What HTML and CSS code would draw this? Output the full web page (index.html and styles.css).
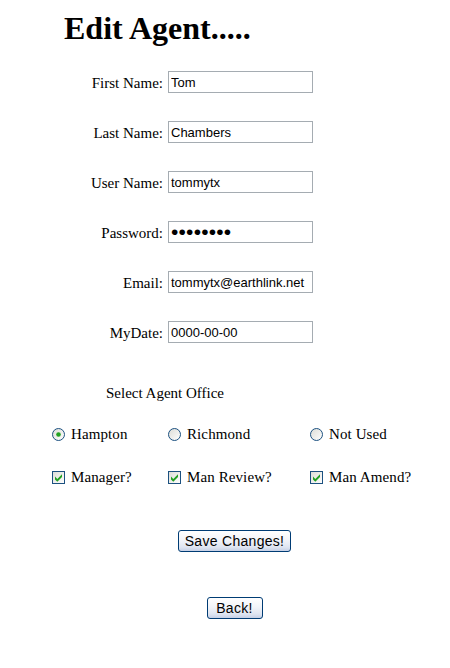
FILE: index.html
```html
<!DOCTYPE html>
<html>
<head>
<meta charset="utf-8">
<title>Edit Agent</title>
<link rel="stylesheet" href="styles.css">
</head>
<body>
<h1 class="title">Edit Agent.....</h1>
<form class="agent-form">
  <div class="fields">
    <label class="field-label" for="fn">First Name:</label>
    <input class="text-input" id="fn" type="text" value="Tom">
    <label class="field-label" for="ln">Last Name:</label>
    <input class="text-input" id="ln" type="text" value="Chambers">
    <label class="field-label" for="un">User Name:</label>
    <input class="text-input" id="un" type="text" value="tommytx">
    <label class="field-label" for="pw">Password:</label>
    <input class="text-input password" id="pw" type="password" value="tommytx1">
    <label class="field-label" for="em">Email:</label>
    <input class="text-input" id="em" type="text" value="tommytx@earthlink.net">
    <label class="field-label" for="md">MyDate:</label>
    <input class="text-input" id="md" type="text" value="0000-00-00">
  </div>

  <div class="office-title">Select Agent Office</div>

  <div class="options">
    <label class="opt">
      <input class="hidden-input" type="radio" name="office" checked>
      <svg class="radio-icon" width="13" height="13" viewBox="0 0 13 13">
        <defs>
          <linearGradient id="rg" x1="0" y1="0" x2="1" y2="1">
            <stop offset="0" stop-color="#dcdcd6"/>
            <stop offset="1" stop-color="#ffffff"/>
          </linearGradient>
        </defs>
        <circle cx="6.5" cy="6.5" r="6" fill="url(#rg)" stroke="#1c5180"/>
        <circle cx="6.5" cy="6.5" r="2.3" fill="#21a121"/>
      </svg>
      <span>Hampton</span>
    </label>
    <label class="opt">
      <input class="hidden-input" type="radio" name="office">
      <svg class="radio-icon" width="13" height="13" viewBox="0 0 13 13">
        <circle cx="6.5" cy="6.5" r="6" fill="url(#rg)" stroke="#1c5180"/>
      </svg>
      <span>Richmond</span>
    </label>
    <label class="opt">
      <input class="hidden-input" type="radio" name="office">
      <svg class="radio-icon" width="13" height="13" viewBox="0 0 13 13">
        <circle cx="6.5" cy="6.5" r="6" fill="url(#rg)" stroke="#1c5180"/>
      </svg>
      <span>Not Used</span>
    </label>

    <label class="opt">
      <input class="hidden-input" type="checkbox" checked>
      <svg class="check-icon" width="13" height="13" viewBox="0 0 13 13">
        <rect x="0.5" y="0.5" width="12" height="12" fill="url(#rg)" stroke="#1c5180"/>
        <path d="M3 5.6 L5.3 7.9 L10 3.2 L10 6 L5.3 10.7 L3 8.4 Z" fill="#21a121"/>
      </svg>
      <span>Manager?</span>
    </label>
    <label class="opt">
      <input class="hidden-input" type="checkbox" checked>
      <svg class="check-icon" width="13" height="13" viewBox="0 0 13 13">
        <rect x="0.5" y="0.5" width="12" height="12" fill="url(#rg)" stroke="#1c5180"/>
        <path d="M3 5.6 L5.3 7.9 L10 3.2 L10 6 L5.3 10.7 L3 8.4 Z" fill="#21a121"/>
      </svg>
      <span>Man Review?</span>
    </label>
    <label class="opt">
      <input class="hidden-input" type="checkbox" checked>
      <svg class="check-icon" width="13" height="13" viewBox="0 0 13 13">
        <rect x="0.5" y="0.5" width="12" height="12" fill="url(#rg)" stroke="#1c5180"/>
        <path d="M3 5.6 L5.3 7.9 L10 3.2 L10 6 L5.3 10.7 L3 8.4 Z" fill="#21a121"/>
      </svg>
      <span>Man Amend?</span>
    </label>
  </div>

  <div class="actions">
    <button class="xp-button save" type="submit">Save Changes!</button>
  </div>
  <div class="actions back-row">
    <button class="xp-button back" type="button">Back!</button>
  </div>
</form>
</body>
</html>
```

FILE: styles.css
```css
html, body {
  margin: 0;
  padding: 0;
  background: #ffffff;
  color: #000000;
  font-family: "Liberation Serif", "Times New Roman", serif;
  font-size: 15px;
}

.title {
  margin: 10px 0 0 64px;
  font-size: 32px;
  font-weight: bold;
  line-height: 37px;
}

.agent-form {
  margin: 0;
}

.fields {
  display: grid;
  grid-template-columns: 163px 145px;
  column-gap: 5px;
  row-gap: 28px;
  margin-top: 24px;
  align-items: center;
}

.field-label {
  justify-self: end;
  padding-top: 3px;
}

.text-input {
  box-sizing: border-box;
  width: 145px;
  height: 22px;
  margin: 0;
  padding: 1px 2px;
  border: 1px solid #a5acb2;
  font-family: "Liberation Sans", Arial, sans-serif;
  font-size: 13px;
  color: #000;
  background: #fff;
  outline: none;
}

.password {
  font-size: 21px;
  letter-spacing: 0.2px;
  padding: 0 2px;
}

.office-title {
  margin: 42px 0 0 106px;
  line-height: 17px;
}

.options {
  display: grid;
  grid-template-columns: 116px 142px auto;
  row-gap: 26px;
  margin: 24px 0 0 52px;
}

.opt {
  display: flex;
  align-items: center;
  gap: 6px;
  height: 17px;
  letter-spacing: 0.1px;
}

.hidden-input {
  position: absolute;
  opacity: 0;
  width: 0;
  height: 0;
  margin: 0;
}

.radio-icon, .check-icon {
  flex: none;
  display: block;
}

.actions {
  display: flex;
  justify-content: center;
  margin-top: 44px;
  width: 469px;
}

.back-row {
  margin-top: 45px;
}

.xp-button {
  box-sizing: border-box;
  height: 22px;
  padding: 0;
  border: 1px solid #003c74;
  border-radius: 3px;
  background: linear-gradient(#ffffff 0%, #f2f4f9 45%, #dfe5f1 80%, #c6d0e6 100%);
  font-family: "Liberation Sans", Arial, sans-serif;
  font-size: 14px;
  letter-spacing: 0.3px;
  color: #000;
}

.save {
  width: 113px;
}

.back {
  width: 56px;
}
```
